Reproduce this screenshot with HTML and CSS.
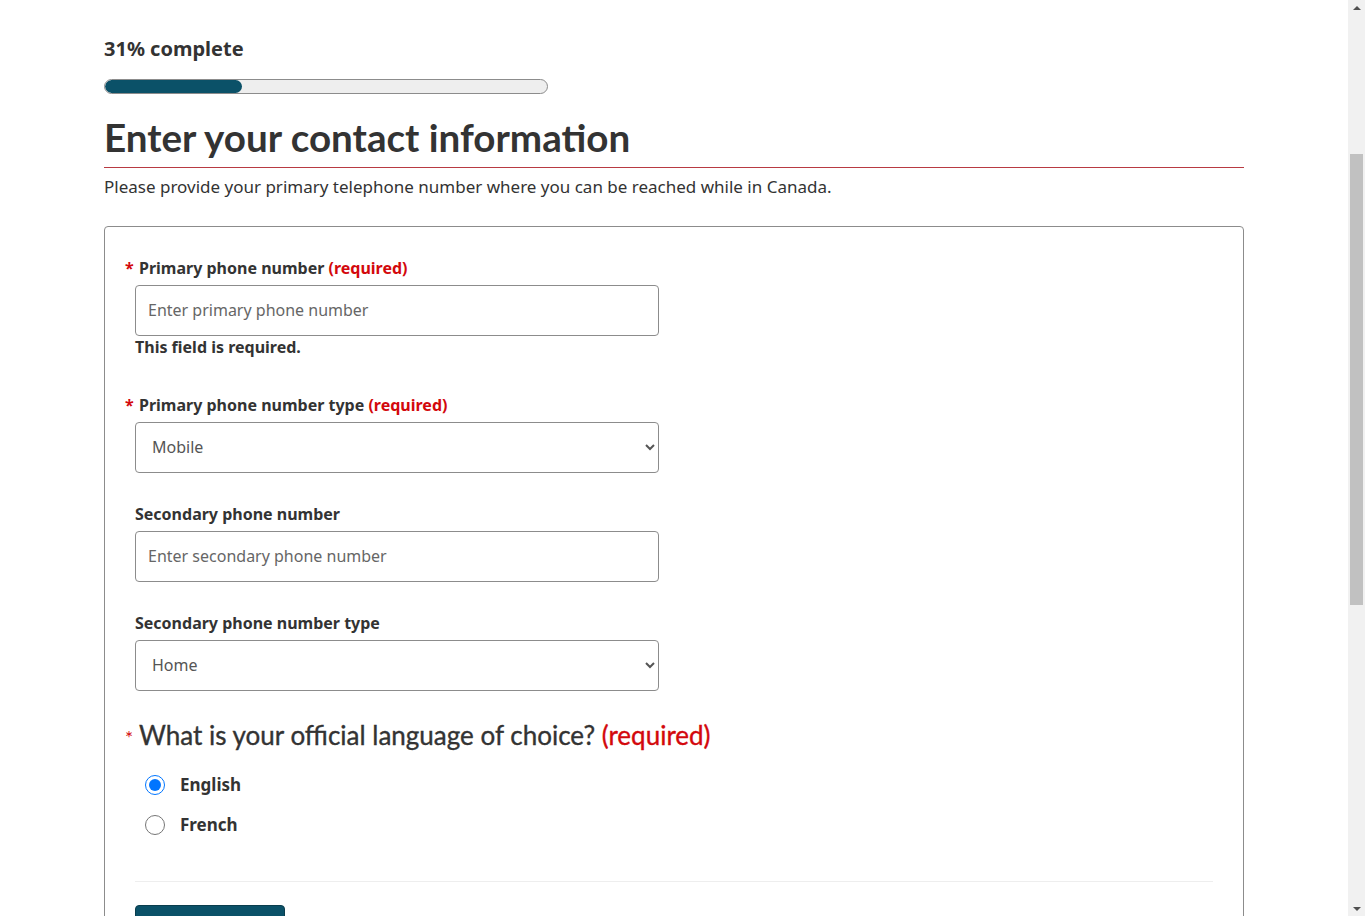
FILE: index.html
```html
<!DOCTYPE html>
<html lang="en">
<head>
<meta charset="utf-8">
<title>Enter your contact information</title>
<link rel="stylesheet" href="styles.css">
</head>
<body>
<main class="container">
  <div class="progress-block">
    <p class="progress-label">31% complete</p>
    <div class="progress-track"><div class="progress-fill" style="width:31%"></div></div>
  </div>
  <h1 class="page-title">Enter your contact information</h1>
  <div class="title-rule"></div>
  <p class="intro">Please provide your primary telephone number where you can be reached while in Canada.</p>

  <form class="form-box">
    <div class="group group-error">
      <label class="label required" for="p1">Primary phone number <span class="req">(required)</span></label>
      <input class="control" id="p1" type="text" placeholder="Enter primary phone number">
      <p class="error-msg">This field is required.</p>
    </div>
    <div class="group">
      <label class="label required" for="p1t">Primary phone number type <span class="req">(required)</span></label>
      <select class="control select" id="p1t">
        <option>Mobile</option>
        <option>Home</option>
        <option>Work</option>
      </select>
    </div>
    <div class="group">
      <label class="label" for="p2">Secondary phone number</label>
      <input class="control" id="p2" type="text" placeholder="Enter secondary phone number">
    </div>
    <div class="group">
      <label class="label" for="p2t">Secondary phone number type</label>
      <select class="control select" id="p2t">
        <option>Home</option>
        <option>Mobile</option>
        <option>Work</option>
      </select>
    </div>
    <fieldset class="lang">
      <legend class="lang-legend"><span class="star">*</span>What is your official language of choice? <span class="req">(required)</span></legend>
      <div class="radios">
        <label class="radio"><input type="radio" name="lang" checked><span>English</span></label>
        <label class="radio"><input type="radio" name="lang"><span>French</span></label>
      </div>
    </fieldset>
    <hr class="divider">
    <div class="actions">
      <button type="button" class="btn-primary">Continue</button>
    </div>
  </form>
</main>
<div class="scrollbar" aria-hidden="true">
  <span class="sb-arrow sb-up"></span>
  <div class="sb-track"><div class="sb-thumb"></div></div>
  <span class="sb-arrow sb-down"></span>
</div>
</body>
</html>
```

FILE: styles.css
```css
* { box-sizing: border-box; }

html, body {
  margin: 0;
  padding: 0;
  background: #fff;
}

body {
  font-family: "Noto Sans", "DejaVu Sans", sans-serif;
  font-size: 16px;
  line-height: 24px;
  color: #333;
  padding-right: 17px;
}

.container {
  max-width: 1140px;
  margin: 0 auto;
  padding-top: 34px;
  padding-bottom: 60px;
}

.progress-label {
  margin: 0;
  font-size: 20px;
  line-height: 30px;
  font-weight: 700;
  color: #333;
}

.progress-track {
  margin-top: 15px;
  width: 444px;
  height: 15px;
  border: 1px solid #8c8c8c;
  border-radius: 8px;
  background: #eee;
  overflow: hidden;
}

.progress-fill {
  height: 100%;
  background: #0b5168;
  border-radius: 8px;
}

.page-title {
  margin: 20px 0 0;
  font-family: Lato, "Noto Sans", sans-serif;
  font-weight: 700;
  font-size: 38.6px;
  line-height: 46px;
  color: #333;
  padding-bottom: 7px;
}

.title-rule {
  height: 1px;
  background-color: #b83a42;
}

.intro {
  margin: 7px 0 0;
  font-size: 17px;
  line-height: 24px;
}

.form-box {
  margin-top: 27px;
  border: 1px solid #8c8c8c;
  border-radius: 4px;
  padding: 29px 30px 40px;
}

.group {
  margin-bottom: 29px;
}

.group-error {
  margin-bottom: 34px;
}

.label {
  display: block;
  font-weight: 700;
  font-size: 16px;
  line-height: 24px;
  color: #333;
  margin-bottom: 5px;
}

.required::before {
  content: "*";
  color: #d3080c;
  display: inline-block;
  width: 14px;
  margin-left: -14px;
  padding-left: 4px;
}

.req {
  color: #d3080c;
}

.control {
  display: block;
  width: 524px;
  height: 51px;
  border: 1px solid #8c8c8c;
  border-radius: 4px;
  padding: 0 12px 1px;
  font-family: "Noto Sans", "DejaVu Sans", sans-serif;
  font-size: 16px;
  color: #333;
  background: #fff;
}

.control::placeholder {
  color: #666;
  opacity: 1;
}

.select {
  padding: 0 8px 1px 12px;
  color: #555;
}

.error-msg {
  margin: -1px 0 0;
  font-weight: 700;
  font-size: 16px;
  line-height: 24px;
  color: #333;
}

.lang {
  border: 0;
  margin: 0;
  padding: 0;
  min-width: 0;
}

.lang-legend {
  padding: 0 0 0 4px;
  font-family: Lato, "Noto Sans", sans-serif;
  font-size: 26px;
  line-height: 31px;
  font-weight: 400;
  color: #333;
  margin-top: -2px;
  -webkit-text-stroke: 0.35px #333;
}

.lang-legend .req {
  -webkit-text-stroke: 0.35px #d3080c;
}

.star {
  color: #d3080c;
  font-size: 19px;
  display: inline-block;
  width: 14px;
  margin-left: -14px;
  -webkit-text-stroke: 0;
}

.radios {
  padding: 20px 0 0 10px;
  display: flex;
  flex-direction: column;
  gap: 16px;
}

.radio {
  display: flex;
  align-items: center;
  gap: 15px;
  font-weight: 700;
  font-size: 17px;
  line-height: 24px;
  color: #333;
}

.radio input {
  width: 20px;
  height: 20px;
  margin: 0;
}

.divider {
  margin: 44px 0 0;
  border: 0;
  border-top: 1px solid #eee;
}

.actions {
  padding-top: 23px;
}

.btn-primary {
  width: 150px;
  border: 1px solid #0a3d4d;
  border-radius: 4px;
  background: #0b5168;
  color: #fff;
  font-family: "Noto Sans", "DejaVu Sans", sans-serif;
  font-size: 16px;
  line-height: 24px;
  padding: 18px 16px;
}

/* imitation of the browser's vertical scrollbar */
.scrollbar {
  position: fixed;
  top: 0;
  right: 0;
  width: 17px;
  height: 100vh;
  background: #f1f1f1;
  display: flex;
  flex-direction: column;
}

.sb-arrow {
  height: 15px;
  flex: none;
  display: flex;
  align-items: center;
  justify-content: center;
}

.sb-up::before {
  content: "";
  border-left: 4px solid transparent;
  border-right: 4px solid transparent;
  border-bottom: 4px solid #505050;
}

.sb-down::before {
  content: "";
  border-left: 4px solid transparent;
  border-right: 4px solid transparent;
  border-top: 4px solid #505050;
}

.sb-track {
  flex: 1;
  padding: 139px 2px 0;
}

.sb-thumb {
  height: 451px;
  background: #c1c1c1;
}
```
